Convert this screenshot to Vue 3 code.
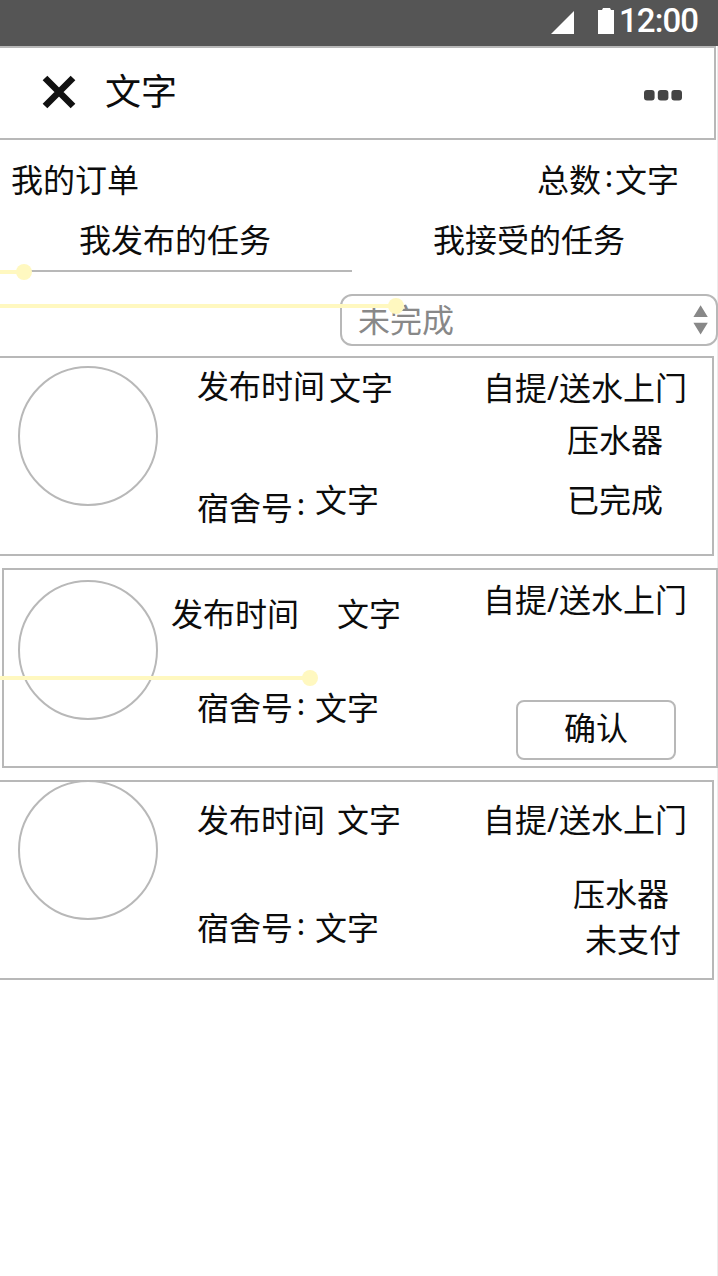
<script setup>
const orders = [
  { kind: 'done', service: '自提/送水上门', extras: ['压水器', '已完成'], confirm: false },
  { kind: 'pending', service: '自提/送水上门', extras: [], confirm: true },
  { kind: 'unpaid', service: '自提/送水上门', extras: ['压水器', '未支付'], confirm: false },
]
</script>

<template>
  <div class="screen" lang="zh-CN">
    <div class="status">
      <svg class="signal" width="23" height="23" viewBox="0 0 23 23"><path d="M23 0V23H0Z" fill="#fff" /></svg>
      <svg class="battery" width="16" height="26" viewBox="0 0 16 26"><path d="M0 2H4L5 0H12L13 2H16V26H0Z" fill="#fff" /></svg>
      <span class="clock">12:00</span>
    </div>

    <header class="header">
      <svg class="close" width="34" height="34" viewBox="0 0 34 34"><path d="M3 3L31 31M31 3L3 31" stroke="#111" stroke-width="6.6" /></svg>
      <h1 class="title">文字</h1>
      <svg class="more" width="38" height="11" viewBox="0 0 38 11" fill="#444">
        <rect width="10.6" height="10.6" rx="3" />
        <rect x="13.8" width="10.6" height="10.6" rx="3" />
        <rect x="27.4" width="10.6" height="10.6" rx="3" />
      </svg>
    </header>

    <div class="summary">
      <span>我的订单</span>
      <span class="total"><span class="total-label">总数<b class="colon">:</b></span><span>文字</span></span>
    </div>

    <nav class="tabs">
      <div class="tab active">
        我发布的任务
        <i class="guide guide-tab"></i>
      </div>
      <div class="tab">我接受的任务</div>
    </nav>

    <div class="filter">
      <div class="select">
        <span>未完成</span>
        <svg width="16" height="30" viewBox="0 0 16 30"><path d="M8.6 .3L15.8 12H1.4ZM8.6 29.5L1.4 17.7H15.8Z" fill="#888" /></svg>
      </div>
      <i class="guide guide-filter"></i>
    </div>

    <section v-for="o in orders" :key="o.kind" class="card" :class="o.kind">
      <div class="avatar"></div>
      <div class="labels">
        <span>发布时间</span>
        <span class="room">宿舍号<b class="colon">:</b></span>
      </div>
      <div class="values">
        <span class="time">文字</span>
        <span>文字</span>
      </div>
      <div class="side">
        <span>{{ o.service }}</span>
        <span v-for="(e, i) in o.extras" :key="e" :class="'extra' + i">{{ e }}</span>
        <button v-if="o.confirm" class="confirm">确认</button>
      </div>
      <i v-if="o.confirm" class="guide guide-card"></i>
    </section>
  </div>
</template>

<style>
body {
  margin: 0;
  background: #fff;
}
</style>

<style scoped>
.screen {
  box-sizing: border-box;
  width: 718px;
  height: 1276px;
  overflow: hidden;
  background: linear-gradient(#ececec, #ececec) right / 1px 100% no-repeat #fff;
  color: #0c0c0c;
  font: 32px/40px "Noto Sans", "Noto Sans CJK SC", sans-serif;
  white-space: nowrap;
}
.status {
  display: flex;
  justify-content: flex-end;
  box-sizing: border-box;
  height: 46px;
  padding-right: 20px;
  background: #555;
  color: #fff;
}
.signal { margin: 11px 24px 0 0; }
.battery { margin: 8px 5px 0 0; }
.clock {
  width: 79px;
  font: 500 33px/42px Roboto, sans-serif;
  letter-spacing: -0.9px;
}
.header {
  display: flex;
  box-sizing: border-box;
  width: 716px;
  height: 94px;
  border: 2px solid #b8b8b8;
  border-left: 0;
}
.close { margin: 27px 0 0 42px; }
.title {
  margin: 23px 0 0 29px;
  font-size: 36px;
  font-weight: 400;
  line-height: 42px;
}
.more { margin: 42px 32px 0 auto; }
.summary {
  display: flex;
  justify-content: space-between;
  padding: 20px 39px 0 11px;
}
.total { display: flex; }
.total-label { width: 78px; }
.colon {
  margin-left: 4px;
  font-size: 29px;
  font-weight: 500;
  line-height: 0;
  vertical-align: 5px;
}
.tabs {
  display: flex;
  height: 52px;
  padding-top: 20px;
}
.tab {
  position: relative;
  box-sizing: border-box;
  width: 352px;
  height: 52px;
  padding-left: 81px;
}
.tab.active {
  padding-left: 79px;
  border-bottom: 2px solid #b8b8b8;
}
.filter {
  position: relative;
  display: flex;
  justify-content: flex-end;
  padding-top: 22px;
}
.select {
  display: flex;
  align-items: center;
  justify-content: space-between;
  box-sizing: border-box;
  width: 378px;
  height: 52px;
  padding: 0 8px 0 16px;
  border: 2px solid #b8b8b8;
  border-radius: 12px;
  background: #fff;
  color: #888;
}
/* flow markers laid over the wireframe */
.guide {
  position: absolute;
  left: 0;
  height: 4px;
  background: #fff8c0;
}
.guide::after {
  content: "";
  position: absolute;
  right: -8px;
  top: -6px;
  width: 16px;
  height: 16px;
  border-radius: 50%;
  background: #fff8c0;
}
.guide-tab { width: 24px; top: 50px; }
.guide-filter { width: 396px; top: 32px; }
.guide-card { width: 310px; left: -4px; top: 106px; }

.card {
  position: relative;
  display: flex;
  box-sizing: border-box;
  width: 714px;
  height: 200px;
  margin-top: 12px;
  border: 2px solid #b8b8b8;
  border-left: 0;
}
.done { margin-top: 10px; }
.pending {
  width: 716px;
  margin-left: 2px;
  border-left: 2px solid #b8b8b8;
}
.avatar {
  box-sizing: border-box;
  width: 140px;
  height: 140px;
  margin: 8px 0 0 18px;
  border: 2px solid #b8b8b8;
  border-radius: 50%;
}
.pending .avatar { margin: 10px 0 0 14px; }
.unpaid .avatar { margin-top: -2px; }
.labels,
.values,
.side {
  display: flex;
  flex-direction: column;
}
.labels {
  gap: 82px;
  width: 118px;
  margin: 8px 0 0 39px;
}
.values {
  gap: 72px;
  width: 168px;
  padding-top: 10px;
}
.side { padding-top: 10px; }
.time { margin-left: 22px; }
.done .time { margin-left: 14px; }
.pending .labels { gap: 54px; width: 144px; margin: 24px 0 0 13px; }
.pending .room { margin-left: 26px; }
.pending .values { gap: 54px; padding-top: 24px; }
.unpaid .labels { gap: 68px; margin-top: 18px; }
.unpaid .values { gap: 68px; padding-top: 18px; }
.unpaid .side { padding-top: 18px; }
.extra0 { margin: 12px 0 0 84px; }
.extra1 { margin: 20px 0 0 84px; }
.unpaid .extra0 { margin: 34px 0 0 90px; }
.unpaid .extra1 { margin: 6px 0 0 102px; }
.confirm {
  width: 160px;
  height: 60px;
  margin: 80px 0 0 33px;
  padding: 0 0 4px;
  border: 2px solid #b8b8b8;
  border-radius: 8px;
  background: #fff;
  color: inherit;
  font: inherit;
}
</style>
